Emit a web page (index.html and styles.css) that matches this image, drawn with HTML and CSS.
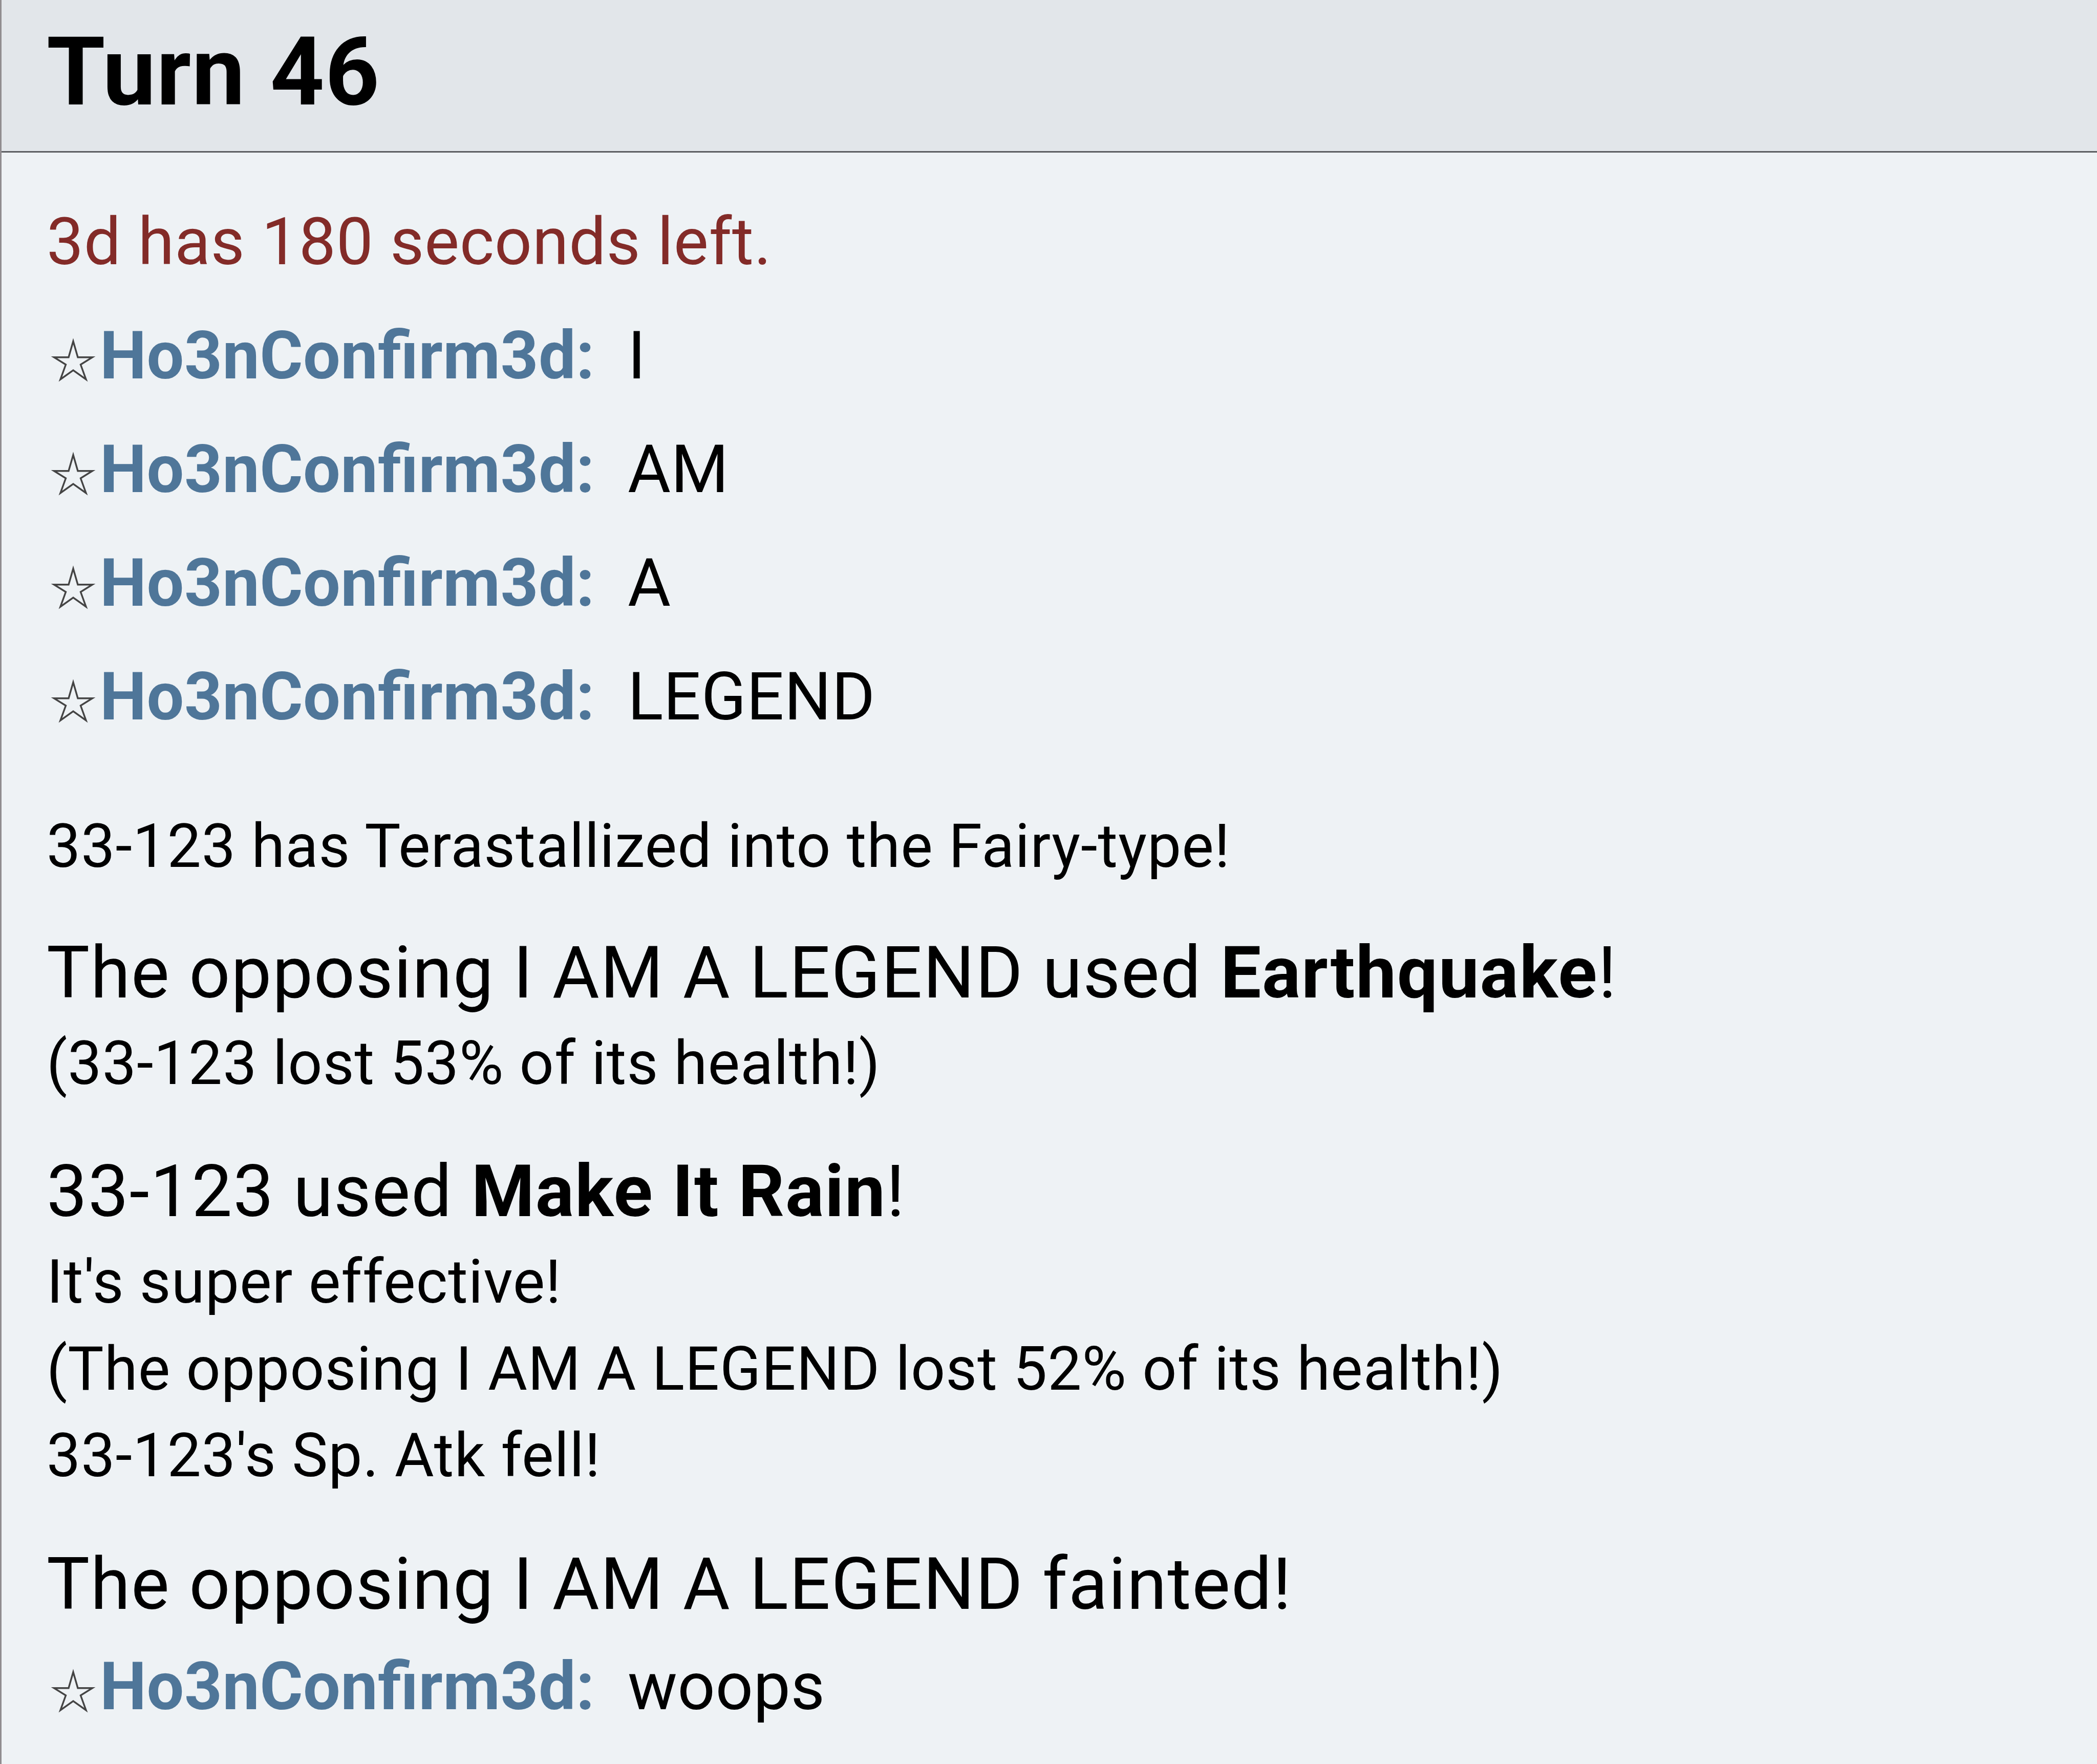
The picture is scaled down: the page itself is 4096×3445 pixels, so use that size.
FILE: index.html
```html
<!DOCTYPE html>
<html lang="en">

<head>
    <meta charset="UTF-8">
    <title>Battle log</title>
    <link rel="stylesheet" href="styles.css">
</head>

<body>
    <div class="battle-log">
        <h2 class="turn">Turn 46</h2>

        <div class="timer">3d has 180 seconds left.</div>

        <!-- chat -->
        <div class="chat"><svg class="star" viewBox="0 0 86 86"><path d="M43 5.5L52 36.7H80.5L57.5 51L68 80L43 62L18 80L28.5 51L5.5 36.7H34Z" /></svg><strong>Ho3nConfirm3d:</strong><span>I</span></div>
        <div class="chat"><svg class="star" viewBox="0 0 86 86"><path d="M43 5.5L52 36.7H80.5L57.5 51L68 80L43 62L18 80L28.5 51L5.5 36.7H34Z" /></svg><strong>Ho3nConfirm3d:</strong><span>AM</span></div>
        <div class="chat"><svg class="star" viewBox="0 0 86 86"><path d="M43 5.5L52 36.7H80.5L57.5 51L68 80L43 62L18 80L28.5 51L5.5 36.7H34Z" /></svg><strong>Ho3nConfirm3d:</strong><span>A</span></div>
        <div class="chat"><svg class="star" viewBox="0 0 86 86"><path d="M43 5.5L52 36.7H80.5L57.5 51L68 80L43 62L18 80L28.5 51L5.5 36.7H34Z" /></svg><strong>Ho3nConfirm3d:</strong><span>LEGEND</span></div>

        <!-- battle messages -->
        <div class="minor tera">33-123 has Terastallized into the Fairy-type!</div>

        <div class="major">The opposing I AM A LEGEND used <b>Earthquake</b>!</div>
        <div class="minor">(33-123 lost 53% of its health!)</div>

        <div class="major">33-123 used <b>Make It Rain</b>!</div>
        <div class="minor">It's super effective!</div>
        <div class="minor">(The opposing I AM A LEGEND lost 52% of its health!)</div>
        <div class="minor">33-123's Sp. Atk fell!</div>

        <div class="major">The opposing I AM A LEGEND fainted!</div>
        <div class="chat"><svg class="star" viewBox="0 0 86 86"><path d="M43 5.5L52 36.7H80.5L57.5 51L68 80L43 62L18 80L28.5 51L5.5 36.7H34Z" /></svg><strong>Ho3nConfirm3d:</strong><span>woops</span></div>
    </div>
</body>

</html>
```
FILE: styles.css
```css
* {
    box-sizing: border-box;
}

body {
    margin: 0;
    background-color: #eef2f5;
    color: #000;
    font-family: Roboto, "Liberation Sans", sans-serif;
}

.battle-log {
    height: 3445px;
    border-left: 3px solid #918d90;
    overflow: hidden;
    white-space: nowrap;
}

.turn {
    height: 298px;
    margin: 0 0 64px;
    padding: 31px 0 0 88px;
    border-bottom: 3px solid #5c5e62;
    background-color: #e2e6ea;
    font-size: 185px;
    line-height: 220px;
    font-weight: bold;
    letter-spacing: 1.5px;
}

.timer {
    height: 220px;
    padding-left: 88px;
    color: #832b28;
    font-size: 128.5px;
    line-height: 220px;
    letter-spacing: 0.65px;
}

/* chat lines */
.chat {
    display: flex;
    height: 222px;
    padding-left: 97px;
    font-size: 129px;
    line-height: 226px;
    letter-spacing: 0.5px;
    /* letter-spacing turns the fi ligature off by default */
    font-feature-settings: "liga" 1;
}

.chat strong {
    margin-right: 64px;
    color: #4f7699;
}

.star {
    flex: none;
    width: 86px;
    height: 86px;
    margin: 79px 9px 0 0;
    fill: none;
    stroke: #444;
    stroke-width: 3.4;
    overflow: visible;
}

/* battle messages */
.minor {
    height: 169.5px;
    padding-left: 88px;
    font-size: 118px;
    line-height: 169.5px;
    letter-spacing: 0.98px;
}

.tera {
    margin-top: 99px;
}

.major {
    height: 186px;
    margin-top: 72px;
    padding-left: 88px;
    font-size: 141px;
    line-height: 186px;
    letter-spacing: 1.65px;
}

.tera + .major {
    margin-top: 68px;
}

.major + .chat {
    margin-top: -6px;
}
```
